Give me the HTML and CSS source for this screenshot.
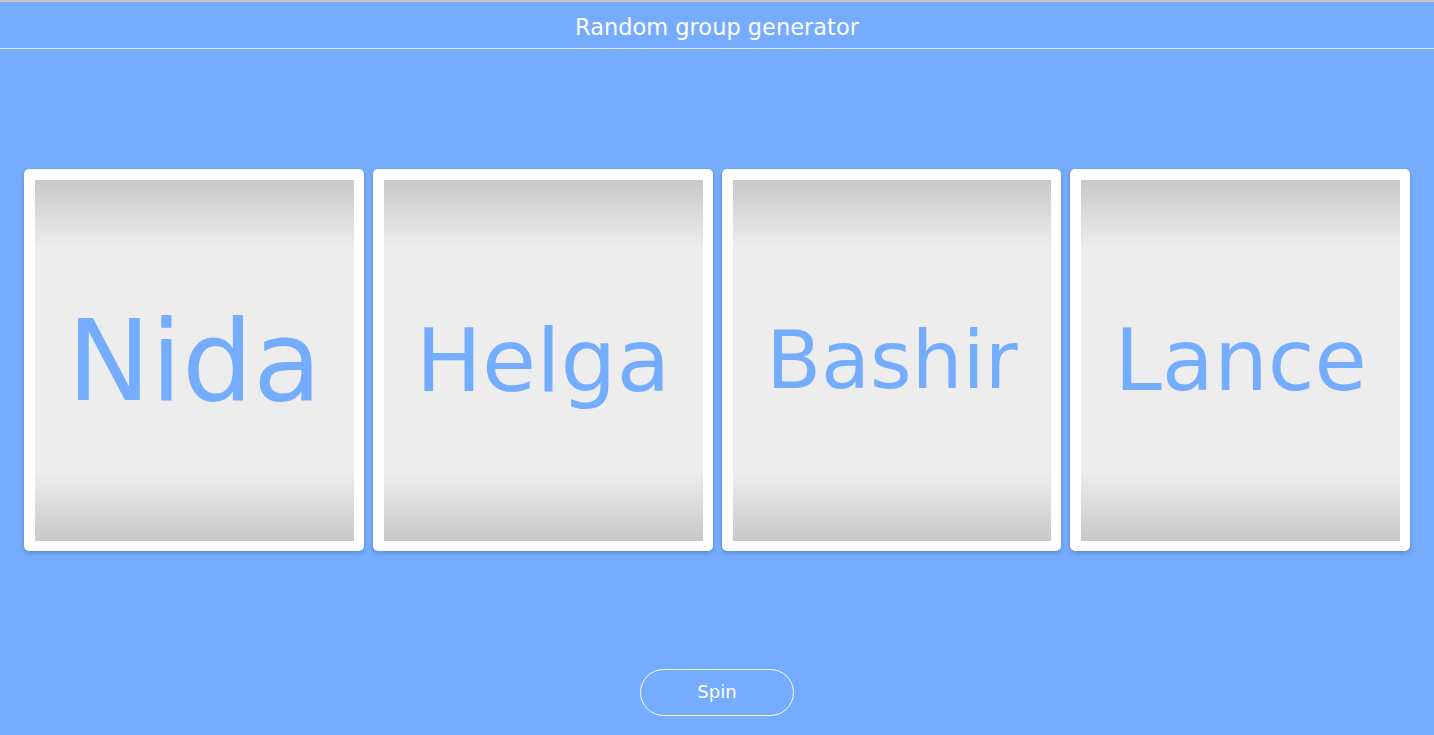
FILE: index.html
```html
<!DOCTYPE html>
<html lang="en">
<head>
<meta charset="utf-8">
<title>Random group generator</title>
<link rel="stylesheet" href="styles.css">
</head>
<body>
<header class="topbar">
  <h1 class="title">Random group generator</h1>
</header>
<main class="stage">
  <section class="reels">
    <div class="card"><div class="reel"><span class="name" style="font-size:112px">Nida</span></div></div>
    <div class="card"><div class="reel"><span class="name" style="font-size:88px">Helga</span></div></div>
    <div class="card"><div class="reel"><span class="name" style="font-size:80px">Bashir</span></div></div>
    <div class="card"><div class="reel"><span class="name" style="font-size:85px">Lance</span></div></div>
  </section>
  <div class="actions">
    <button class="spin" type="button">Spin</button>
  </div>
</main>
</body>
</html>
```
FILE: styles.css
```css
* { box-sizing: border-box; }
html, body { margin: 0; padding: 0; height: 100%; }
body {
  background: #75acfd;
  font-family: "DejaVu Sans", Verdana, sans-serif;
  color: #fff;
  display: flex;
  flex-direction: column;
  overflow: hidden;
}
.topbar {
  border-top: 2px solid #c6c6c6;
  border-bottom: 1px solid #dce8fb;
  height: 49px;
  display: flex;
  align-items: center;
  justify-content: center;
}
.title {
  margin: 0;
  font-weight: normal;
  font-size: 22.5px;
  line-height: 1;
  padding-top: 4px;
}
.stage {
  flex: 1;
  display: flex;
  flex-direction: column;
  padding-top: 120px;
}
.reels {
  display: grid;
  grid-template-columns: repeat(4, 1fr);
  gap: 9px;
  padding: 0 24px;
}
.card {
  background: #fff;
  border-radius: 5px;
  padding: 11px 10px 10px 11px;
  height: 382px;
  box-shadow: 0 2px 4px rgba(40, 70, 140, 0.35);
}
.reel {
  height: 100%;
  background: linear-gradient(#c8c8c8 0%, #ededed 19%, #ededed 81%, #c8c8c8 100%);
  display: flex;
  align-items: center;
  justify-content: center;
  overflow: hidden;
}
.name {
  color: #75adfe;
  line-height: 1;
  white-space: nowrap;
}
.actions {
  display: flex;
  justify-content: center;
  padding-top: 118px;
}
.spin {
  width: 154px;
  height: 47px;
  border: 1px solid #fff;
  border-radius: 24px;
  background: transparent;
  color: #fff;
  font-family: "DejaVu Sans", Verdana, sans-serif;
  font-size: 18px;
  padding: 0 0 2px;
  cursor: pointer;
}
```
